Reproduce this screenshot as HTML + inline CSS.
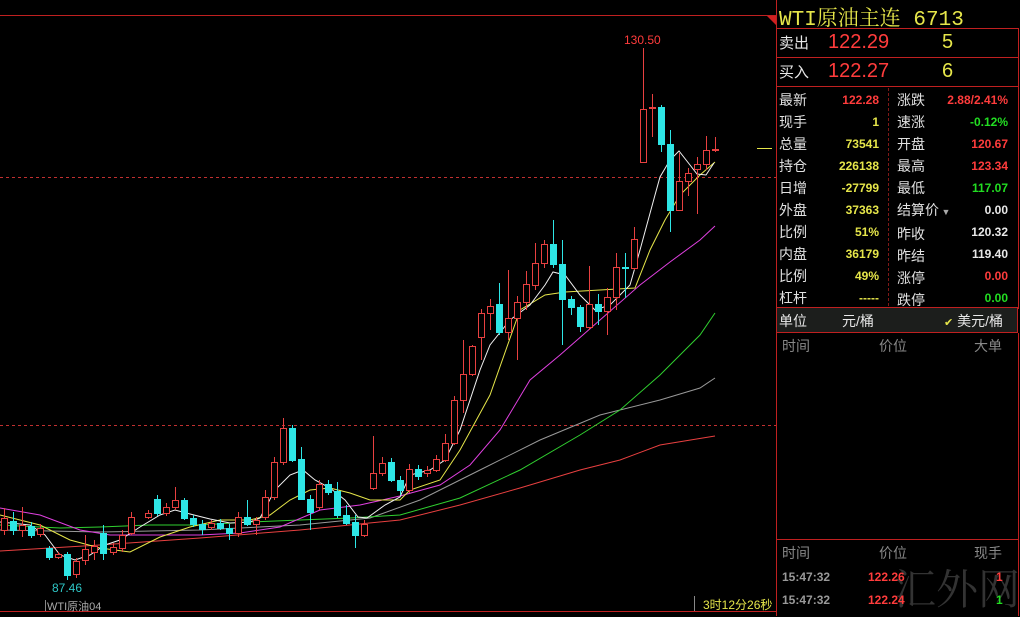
<!DOCTYPE html>
<html><head><meta charset="utf-8"><style>
*{margin:0;padding:0}
body{width:1020px;height:616px;background:#000;position:relative;overflow:hidden;font-family:"Liberation Sans","Noto Sans CJK SC",sans-serif}
.a{position:absolute;white-space:nowrap}
.l{color:#e0e0e0;font-size:14px}
.y{color:#e6e64a}.r{color:#ff3c3c}.g{color:#22dd22}.w{color:#e8e8e8}.gr{color:#aaa}
.v{font-weight:bold;font-size:12px;text-align:right}
</style></head><body>
<svg class="a" style="left:0;top:0" width="1020" height="616">
<line x1="0" y1="15.5" x2="776" y2="15.5" stroke="#c02020"/>
<polygon points="767,16 776,16 776,25" fill="#d02020"/>
<line x1="776.5" y1="0" x2="776.5" y2="612" stroke="#c02020"/>
<line x1="0" y1="611.5" x2="776" y2="611.5" stroke="#c02020"/>
<line x1="0" y1="177.5" x2="776" y2="177.5" stroke="#c03030" stroke-dasharray="3,3"/>
<line x1="0" y1="425.5" x2="776" y2="425.5" stroke="#c03030" stroke-dasharray="3,3"/>
<line x1="757" y1="148.5" x2="772" y2="148.5" stroke="#e6e64a"/>
<line x1="694.5" y1="596" x2="694.5" y2="611" stroke="#888"/>
<line x1="45.5" y1="600" x2="45.5" y2="611" stroke="#888"/>
<g fill="none" stroke-width="1">
<polyline stroke="#e84040" points="0,551 100,545 200,538 300,530 400,520 460,505 520,488 580,470 620,460 660,445 715,436"/>
<polyline stroke="#999" points="0,530 100,532 200,530 300,525 370,518 420,500 480,470 540,440 600,415 660,400 700,388 715,378"/>
<polyline stroke="#30d030" points="0,525 60,528 100,527 150,525 200,525 250,522 300,520 350,518 400,515 460,498 520,470 580,435 620,410 660,375 700,335 715,313"/>
<polyline stroke="#e040e0" points="0,508 40,515 80,530 110,535 150,535 200,535 240,533 280,527 320,510 360,505 400,496 440,485 470,465 500,430 530,380 560,355 600,320 640,285 670,262 700,240 715,226"/>
<polyline stroke="#e6e64a" points="0,515 40,525 70,540 100,548 130,552 160,537 190,527 220,520 250,520 270,515 290,500 310,490 330,488 350,493 370,500 400,500 410,490 440,480 460,450 490,395 520,310 545,295 565,292 600,290 635,288 650,250 665,220 680,195 700,175 715,162"/>
<polyline stroke="#f0f0f0" points="0,522 30,525 45,535 60,555 75,560 90,555 105,545 120,540 140,527 160,515 175,510 190,514 210,519 230,523 250,522 260,518 275,490 290,475 303,470 315,480 330,488 345,500 358,517 367,518 385,505 400,497 410,475 430,470 445,460 460,430 480,370 490,345 510,320 530,305 545,285 553,272 565,275 580,295 595,310 610,305 630,285 640,250 655,195 660,177 670,160 679,151 690,165 697,174 706,175 714,163"/>
</g>
</svg>
<svg class="a" style="left:0;top:0" width="776" height="616">
<g stroke-width="1">
<g fill="#000" stroke="#e84040">
<line x1="4.5" y1="508" x2="4.5" y2="535"/><rect x="1.5" y="518.5" width="6" height="12"/>
<line x1="22.5" y1="507" x2="22.5" y2="537"/><rect x="19.5" y="525.5" width="6" height="5"/>
<line x1="40.5" y1="524" x2="40.5" y2="537"/><rect x="37.5" y="528.5" width="6" height="6"/>
<line x1="58.5" y1="552" x2="58.5" y2="559"/><rect x="55.5" y="554.5" width="6" height="3"/>
<line x1="76.5" y1="558" x2="76.5" y2="578"/><rect x="73.5" y="561.5" width="6" height="13"/>
<line x1="85.5" y1="535" x2="85.5" y2="565"/><rect x="82.5" y="549.5" width="6" height="11"/>
<line x1="94.5" y1="540" x2="94.5" y2="560"/><rect x="91.5" y="546.5" width="6" height="6"/>
<line x1="113.5" y1="543" x2="113.5" y2="555"/><rect x="110.5" y="547.5" width="6" height="5"/>
<line x1="122.5" y1="530" x2="122.5" y2="552"/><rect x="119.5" y="535.5" width="6" height="13"/>
<line x1="131.5" y1="512" x2="131.5" y2="535"/><rect x="128.5" y="517.5" width="6" height="16"/>
<line x1="148.5" y1="510" x2="148.5" y2="519"/><rect x="145.5" y="513.5" width="6" height="4"/>
<line x1="166.5" y1="503" x2="166.5" y2="516"/><rect x="163.5" y="507.5" width="6" height="6"/>
<line x1="175.5" y1="487" x2="175.5" y2="510"/><rect x="172.5" y="500.5" width="6" height="7"/>
<line x1="211.5" y1="520" x2="211.5" y2="530"/><rect x="208.5" y="523.5" width="6" height="4"/>
<line x1="238.5" y1="512" x2="238.5" y2="537"/><rect x="235.5" y="517.5" width="6" height="16"/>
<line x1="256.5" y1="517" x2="256.5" y2="535"/><rect x="253.5" y="520.5" width="6" height="4"/>
<line x1="265.5" y1="490" x2="265.5" y2="520"/><rect x="262.5" y="497.5" width="6" height="20"/>
<line x1="274.5" y1="457" x2="274.5" y2="500"/><rect x="271.5" y="462.5" width="6" height="35"/>
<line x1="283.5" y1="418" x2="283.5" y2="465"/><rect x="280.5" y="428.5" width="6" height="34"/>
<line x1="319.5" y1="480" x2="319.5" y2="510"/><rect x="316.5" y="484.5" width="6" height="23"/>
<line x1="364.5" y1="520" x2="364.5" y2="537"/><rect x="361.5" y="524.5" width="6" height="11"/>
<line x1="373.5" y1="436" x2="373.5" y2="490"/><rect x="370.5" y="473.5" width="6" height="15"/>
<line x1="382.5" y1="457" x2="382.5" y2="476"/><rect x="379.5" y="463.5" width="6" height="10"/>
<line x1="409.5" y1="464" x2="409.5" y2="493"/><rect x="406.5" y="469.5" width="6" height="21"/>
<line x1="427.5" y1="466" x2="427.5" y2="477"/><rect x="424.5" y="470.5" width="6" height="3"/>
<line x1="436.5" y1="455" x2="436.5" y2="472"/><rect x="433.5" y="459.5" width="6" height="11"/>
<line x1="445.5" y1="434" x2="445.5" y2="462"/><rect x="442.5" y="443.5" width="6" height="17"/>
<line x1="454.5" y1="396" x2="454.5" y2="445"/><rect x="451.5" y="400.5" width="6" height="43"/>
<line x1="463.5" y1="340" x2="463.5" y2="413"/><rect x="460.5" y="374.5" width="6" height="26"/>
<line x1="472.5" y1="345" x2="472.5" y2="376"/><rect x="469.5" y="346.5" width="6" height="28"/>
<line x1="481.5" y1="309" x2="481.5" y2="360"/><rect x="478.5" y="313.5" width="6" height="24"/>
<line x1="490.5" y1="299" x2="490.5" y2="330"/><rect x="487.5" y="306.5" width="6" height="7"/>
<line x1="508.5" y1="270" x2="508.5" y2="340"/><rect x="505.5" y="318.5" width="6" height="14"/>
<line x1="517.5" y1="296" x2="517.5" y2="360"/><rect x="514.5" y="302.5" width="6" height="16"/>
<line x1="526.5" y1="271" x2="526.5" y2="310"/><rect x="523.5" y="284.5" width="6" height="18"/>
<line x1="535.5" y1="243" x2="535.5" y2="290"/><rect x="532.5" y="263.5" width="6" height="22"/>
<line x1="544.5" y1="240" x2="544.5" y2="268"/><rect x="541.5" y="244.5" width="6" height="19"/>
<line x1="589.5" y1="266" x2="589.5" y2="330"/><rect x="586.5" y="304.5" width="6" height="23"/>
<line x1="607.5" y1="288" x2="607.5" y2="335"/><rect x="604.5" y="297.5" width="6" height="14"/>
<line x1="616.5" y1="253" x2="616.5" y2="310"/><rect x="613.5" y="267.5" width="6" height="30"/>
<line x1="634.5" y1="227" x2="634.5" y2="270"/><rect x="631.5" y="239.5" width="6" height="29"/>
<line x1="643.5" y1="48" x2="643.5" y2="162"/><rect x="640.5" y="109.5" width="6" height="53"/>
<line x1="652.5" y1="94" x2="652.5" y2="137"/><rect x="649.5" y="107.5" width="6" height="1"/>
<line x1="679.5" y1="153" x2="679.5" y2="211"/><rect x="676.5" y="181.5" width="6" height="29"/>
<line x1="688.5" y1="168" x2="688.5" y2="196"/><rect x="685.5" y="173.5" width="6" height="8"/>
<line x1="697.5" y1="157" x2="697.5" y2="214"/><rect x="694.5" y="164.5" width="6" height="5"/>
<line x1="706.5" y1="136" x2="706.5" y2="170"/><rect x="703.5" y="150.5" width="6" height="14"/>
<line x1="715.5" y1="137" x2="715.5" y2="152"/><rect x="712.5" y="149.5" width="6" height="1"/>
</g>
<g fill="#2ee6e6" stroke="#2ee6e6">
<line x1="13.5" y1="512" x2="13.5" y2="535"/><rect x="10.5" y="521.5" width="6" height="9"/>
<line x1="31.5" y1="522" x2="31.5" y2="538"/><rect x="28.5" y="526.5" width="6" height="9"/>
<line x1="49.5" y1="546" x2="49.5" y2="560"/><rect x="46.5" y="548.5" width="6" height="9"/>
<line x1="67.5" y1="552" x2="67.5" y2="580"/><rect x="64.5" y="554.5" width="6" height="21"/>
<line x1="103.5" y1="525" x2="103.5" y2="560"/><rect x="100.5" y="533.5" width="6" height="20"/>
<line x1="157.5" y1="495" x2="157.5" y2="516"/><rect x="154.5" y="499.5" width="6" height="14"/>
<line x1="184.5" y1="498" x2="184.5" y2="520"/><rect x="181.5" y="500.5" width="6" height="18"/>
<line x1="193.5" y1="515" x2="193.5" y2="527"/><rect x="190.5" y="518.5" width="6" height="6"/>
<line x1="202.5" y1="520" x2="202.5" y2="535"/><rect x="199.5" y="524.5" width="6" height="5"/>
<line x1="220.5" y1="519" x2="220.5" y2="530"/><rect x="217.5" y="523.5" width="6" height="5"/>
<line x1="229.5" y1="524" x2="229.5" y2="540"/><rect x="226.5" y="528.5" width="6" height="5"/>
<line x1="247.5" y1="500" x2="247.5" y2="526"/><rect x="244.5" y="517.5" width="6" height="7"/>
<line x1="292.5" y1="425" x2="292.5" y2="462"/><rect x="289.5" y="428.5" width="6" height="32"/>
<line x1="301.5" y1="447" x2="301.5" y2="500"/><rect x="298.5" y="459.5" width="6" height="40"/>
<line x1="310.5" y1="495" x2="310.5" y2="530"/><rect x="307.5" y="499.5" width="6" height="13"/>
<line x1="328.5" y1="480" x2="328.5" y2="495"/><rect x="325.5" y="484.5" width="6" height="8"/>
<line x1="337.5" y1="482" x2="337.5" y2="518"/><rect x="334.5" y="491.5" width="6" height="24"/>
<line x1="346.5" y1="505" x2="346.5" y2="525"/><rect x="343.5" y="515.5" width="6" height="8"/>
<line x1="355.5" y1="515" x2="355.5" y2="548"/><rect x="352.5" y="522.5" width="6" height="13"/>
<line x1="391.5" y1="458" x2="391.5" y2="482"/><rect x="388.5" y="462.5" width="6" height="18"/>
<line x1="400.5" y1="476" x2="400.5" y2="495"/><rect x="397.5" y="480.5" width="6" height="10"/>
<line x1="418.5" y1="465" x2="418.5" y2="480"/><rect x="415.5" y="469.5" width="6" height="7"/>
<line x1="499.5" y1="283" x2="499.5" y2="335"/><rect x="496.5" y="304.5" width="6" height="28"/>
<line x1="553.5" y1="220" x2="553.5" y2="268"/><rect x="550.5" y="244.5" width="6" height="20"/>
<line x1="562.5" y1="240" x2="562.5" y2="345"/><rect x="559.5" y="264.5" width="6" height="35"/>
<line x1="571.5" y1="296" x2="571.5" y2="315"/><rect x="568.5" y="299.5" width="6" height="8"/>
<line x1="580.5" y1="305" x2="580.5" y2="332"/><rect x="577.5" y="307.5" width="6" height="19"/>
<line x1="598.5" y1="294" x2="598.5" y2="325"/><rect x="595.5" y="304.5" width="6" height="7"/>
<line x1="625.5" y1="253" x2="625.5" y2="298"/><rect x="622.5" y="267.5" width="6" height="1"/>
<line x1="661.5" y1="105" x2="661.5" y2="152"/><rect x="658.5" y="107.5" width="6" height="37"/>
<line x1="670.5" y1="130" x2="670.5" y2="232"/><rect x="667.5" y="144.5" width="6" height="66"/>
</g>
</g>
</svg>
<div class="a r" style="left:624px;top:33px;font-size:12px">130.50</div>
<div class="a" style="left:52px;top:581px;font-size:12px;color:#2ec6c6">87.46</div>
<div class="a" style="left:47px;top:598px;font-size:11px;color:#aaa">WTI原油04</div>
<div class="a y" style="left:703px;top:596px;font-size:12px">3时12分26秒</div>

<div class="a y" style="left:779px;top:2px;font-size:21px;font-family:'Liberation Mono','Noto Serif CJK SC',monospace">WTI原油主连 6713</div>
<div class="a" style="left:776px;top:28px;width:241px;height:280px;border:1px solid #c02020;border-bottom:none"></div>
<div class="a" style="left:776px;top:57px;width:242px;height:1px;background:#c02020"></div>
<div class="a" style="left:776px;top:86px;width:242px;height:1px;background:#c02020"></div>
<div class="a" style="left:888px;top:88px;width:0;height:218px;border-left:1px dashed #801818"></div>
<div class="a w" style="left:779px;top:32px;font-size:15px">卖出</div>
<div class="a r" style="left:828px;top:31px;font-size:20px">122.29</div>
<div class="a y" style="left:942px;top:31px;font-size:20px">5</div>
<div class="a w" style="left:779px;top:61px;font-size:15px">买入</div>
<div class="a r" style="left:828px;top:60px;font-size:20px">122.27</div>
<div class="a y" style="left:942px;top:60px;font-size:20px">6</div>

<div class="a l" style="left:779px;top:89px;line-height:22px">最新<br>现手<br>总量<br>持仓<br>日增<br>外盘<br>比例<br>内盘<br>比例<br>杠杆</div>
<div class="a v" style="left:820px;width:59px;top:89px;line-height:22px"><span class="r">122.28</span><br><span class="y">1</span><br><span class="y">73541</span><br><span class="y">226138</span><br><span class="y">-27799</span><br><span class="y">37363</span><br><span class="y">51%</span><br><span class="y">36179</span><br><span class="y">49%</span><br><span class="y">-----</span></div>
<div class="a l" style="left:897px;top:89px;line-height:22px">涨跌<br>速涨<br>开盘<br>最高<br>最低<br>结算价<span style="color:#aaa;font-size:9px"> ▼</span><br>昨收<br>昨结<br>涨停<br>跌停</div>
<div class="a v" style="left:940px;width:68px;top:89px;line-height:22px"><span class="r">2.88/2.41%</span><br><span class="g">-0.12%</span><br><span class="r">120.67</span><br><span class="r">123.34</span><br><span class="g">117.07</span><br><span class="w">0.00</span><br><span class="w">120.32</span><br><span class="w">119.40</span><br><span class="r">0.00</span><br><span class="g">0.00</span></div>

<div class="a" style="left:776px;top:307px;width:240px;height:24px;background:#1c1e1c;border:1px solid #c02020"></div>
<div class="a w" style="left:779px;top:311px;font-size:14px">单位</div>
<div class="a w" style="left:842px;top:311px;font-size:14px">元/桶</div>
<div class="a w" style="left:944px;top:311px;font-size:14px"><span class="y" style="font-size:11px">✔</span> 美元/桶</div>
<div class="a" style="left:776px;top:333px;width:241px;height:283px;border-left:1px solid #c02020;border-right:1px solid #c02020"></div>
<div class="a gr" style="left:782px;top:336px;font-size:14px;color:#888">时间</div>
<div class="a gr" style="left:879px;top:336px;font-size:14px;color:#888">价位</div>
<div class="a gr" style="left:974px;top:336px;font-size:14px;color:#888">大单</div>
<div class="a" style="left:776px;top:539px;width:242px;height:1px;background:#c02020"></div>
<div class="a gr" style="left:782px;top:543px;font-size:14px;color:#888">时间</div>
<div class="a gr" style="left:879px;top:543px;font-size:14px;color:#888">价位</div>
<div class="a gr" style="left:974px;top:543px;font-size:14px;color:#888">现手</div>
<div class="a" style="left:894px;top:557px;font-size:42px;color:#333;font-family:'Noto Serif CJK SC',serif">汇外网</div>
<div class="a" style="left:782px;top:566px;font-size:12px;font-weight:bold;color:#999;line-height:23px">15:47:32<br>15:47:32</div>
<div class="a r" style="left:868px;top:566px;font-size:12px;font-weight:bold;line-height:23px">122.26<br>122.24</div>
<div class="a" style="left:996px;top:566px;font-size:12px;font-weight:bold;line-height:23px"><span class="r">1</span><br><span class="g">1</span></div>
</body></html>
